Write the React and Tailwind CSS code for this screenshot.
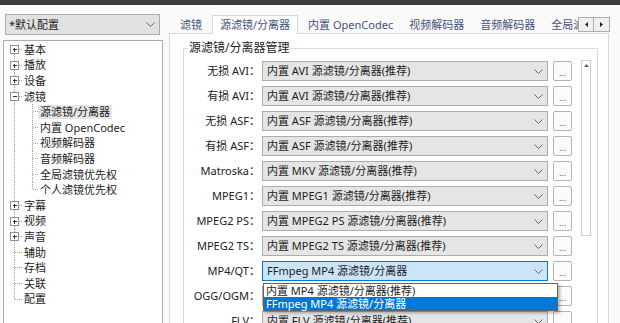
import React from 'react';

const tree = [
  { label: '基本', level: 0, icon: 'plus' },
  { label: '播放', level: 0, icon: 'plus' },
  { label: '设备', level: 0, icon: 'plus' },
  { label: '滤镜', level: 0, icon: 'minus' },
  { label: '源滤镜/分离器', level: 1, selected: true },
  { label: '内置 OpenCodec', level: 1 },
  { label: '视频解码器', level: 1 },
  { label: '音频解码器', level: 1 },
  { label: '全局滤镜优先权', level: 1 },
  { label: '个人滤镜优先权', level: 1, last: true },
  { label: '字幕', level: 0, icon: 'plus' },
  { label: '视频', level: 0, icon: 'plus' },
  { label: '声音', level: 0, icon: 'plus' },
  { label: '辅助', level: 0 },
  { label: '存档', level: 0 },
  { label: '关联', level: 0 },
  { label: '配置', level: 0, last: true },
];

const tabs = ['滤镜', '源滤镜/分离器', '内置 OpenCodec', '视频解码器', '音频解码器', '全局滤镜优先权', '个人滤镜优先权'];

const rows = [
  ['无损 AVI：', '内置 AVI 源滤镜/分离器(推荐)'],
  ['有损 AVI：', '内置 AVI 源滤镜/分离器(推荐)'],
  ['无损 ASF：', '内置 ASF 源滤镜/分离器(推荐)'],
  ['有损 ASF：', '内置 ASF 源滤镜/分离器(推荐)'],
  ['Matroska：', '内置 MKV 源滤镜/分离器(推荐)'],
  ['MPEG1：', '内置 MPEG1 源滤镜/分离器(推荐)'],
  ['MPEG2 PS：', '内置 MPEG2 PS 源滤镜/分离器(推荐)'],
  ['MPEG2 TS：', '内置 MPEG2 TS 源滤镜/分离器(推荐)'],
  ['MP4/QT：', 'FFmpeg MP4 源滤镜/分离器', true],
  ['OGG/OGM：', '内置 OGG 源滤镜/分离器(推荐)'],
  ['FLV：', '内置 FLV 源滤镜/分离器(推荐)'],
];

function Chevron() {
  return (
    <svg width="9" height="5" viewBox="0 0 9 5" className="shrink-0">
      <polyline points="0.5,0.5 4.5,4.5 8.5,0.5" fill="none" stroke="#666" strokeWidth="1" />
    </svg>
  );
}

// 트리 연결선 (점선) + 펼침 상자
function TreeRow({ item, first }) {
  const mid = 7.8;
  const dot = { stroke: '#a0a0a0', strokeWidth: 1, strokeDasharray: '1 1', shapeRendering: 'crispEdges' };
  return (
    <div className="relative h-[15.6px] flex items-center">
      <svg className="absolute left-0 top-0 overflow-visible" width="40" height="16">
        {/* 최상위 세로선 */}
        <line x1="10.5" x2="10.5" y1={first ? mid : 0} y2={item.level === 0 && item.last ? mid : 16} {...dot} />
        {item.level === 0 && <line x1="10.5" x2="19" y1={mid} y2={mid} {...dot} />}
        {item.level === 1 && (
          <>
            <line x1="28.5" x2="28.5" y1="0" y2={item.last ? mid : 16} {...dot} />
            <line x1="28.5" x2="34" y1={mid} y2={mid} {...dot} />
          </>
        )}
        {item.icon && (
          <g shapeRendering="crispEdges">
            <rect x="6.5" y="3.5" width="8" height="8" fill="#fff" stroke="#919191" />
            <line x1="8.5" x2="13" y1="7.5" y2="7.5" stroke="#333" />
            {item.icon === 'plus' && <line x1="10.5" x2="10.5" y1="5.5" y2="10" stroke="#333" />}
          </g>
        )}
      </svg>
      <span
        className={`${item.level ? 'ml-[34px]' : 'ml-[18px]'} px-[2px] leading-[14px] ${item.selected ? 'bg-[#e6e6e6]' : ''}`}
      >
        {item.label}
      </span>
    </div>
  );
}

function Combo({ value, active }) {
  return (
    <div
      className={`h-[20px] w-[286px] shrink-0 flex items-center justify-between pl-[4px] pr-[4px] border ${
        active ? 'bg-[#cce4f7] border-[#0078d7]' : 'bg-[#e5e5e5] border-[#adadad]'
      }`}
    >
      <span className="whitespace-nowrap leading-[18px]">{value}</span>
      <Chevron />
    </div>
  );
}

function DotsButton() {
  return (
    <div className="ml-[5px] h-[20px] w-[19px] shrink-0 border border-[#b4b4b4] rounded-[2px] bg-[#fbfbfb] flex items-end justify-center pb-[3px]">
      <span className="text-[9px] leading-[8px] text-[#555]">...</span>
    </div>
  );
}

export default function App() {
  return (
    <div className="w-[620px] h-[323px] overflow-hidden bg-[#fafafa] text-[11px] text-[#1e1e1e] font-['Noto_Sans','Noto_Sans_CJK_SC',sans-serif]">
      <div className="h-[5px] bg-[#3c3c3c]" />
      <div className="flex">
        {/* 왼쪽: 프로필 + 트리 */}
        <div className="w-[169px] shrink-0 pl-[5px] pt-[9px]">
          <div className="h-[21px] w-[155px] flex items-center justify-between pl-[3px] pr-[4px] bg-[#e1e1e1] border border-[#adadad]">
            <span className="leading-[18px]">*默认配置</span>
            <Chevron />
          </div>
          <div className="mt-[5px] ml-[-2px] w-[160px] h-[300px] bg-white border border-[#abadb3] pt-[1px]">
            {tree.map((it, i) => (
              <TreeRow key={i} item={it} first={i === 0} />
            ))}
          </div>
        </div>

        {/* 오른쪽: 탭 + 설정 */}
        <div className="w-[441px] shrink-0 pt-[9px]">
          <div className="relative z-10 mb-[-1px] flex h-[20px]">
            <div className="ml-[3px] w-[406px] overflow-hidden flex items-end">
              {tabs.map((t, i) =>
                i === 1 ? (
                  <div key={t} className="ml-[2px] mr-[2px] h-[19px] shrink-0 px-[7px] bg-white border border-b-0 border-[#d9d9d9] flex items-center text-[#44557a] whitespace-nowrap">
                    {t}
                  </div>
                ) : (
                  <div key={t} className="h-[18px] shrink-0 px-[8px] flex items-center text-[#44557a] whitespace-nowrap">
                    {t}
                  </div>
                )
              )}
            </div>
            <div className="mt-[3px] h-[15px] flex">
              <div className="w-[16px] h-[15px] border border-[#adadad] bg-[#f0f0f0] flex items-center justify-center">
                <svg width="3" height="5" viewBox="0 0 3 5"><polygon points="3,0 0,2.5 3,5" fill="#222" /></svg>
              </div>
              <div className="w-[16px] h-[15px] border border-l-0 border-[#adadad] bg-[#f0f0f0] flex items-center justify-center">
                <svg width="3" height="5" viewBox="0 0 3 5"><polygon points="0,0 3,2.5 0,5" fill="#222" /></svg>
              </div>
            </div>
          </div>

          <div className="w-[440px] h-[300px] bg-white border border-[#d9d9d9] pt-[14px]">
            <div className="relative ml-[13px] w-[415px] h-[300px] border border-[#dcdcdc] pt-[12px]">
              <span className="absolute left-[4px] top-[-9px] bg-white px-[1px] leading-[16px] text-[12px]">源滤镜/分离器管理</span>
              <div className="flex">
                <div className="flex flex-col gap-[5px]">
                  {rows.map(([label, value, active], i) => (
                    <div key={i} className="relative flex items-center">
                      <div className="w-[76px] shrink-0 text-right whitespace-nowrap text-[#222]">{label}</div>
                      <div className="ml-[2px]">
                        <Combo value={value} active={active} />
                      </div>
                      <DotsButton />
                      {active && (
                        <div className="absolute left-[79px] top-[22px] z-20 w-[295px] bg-white border border-[#646464] shadow-[2px_2px_3px_rgba(0,0,0,0.3)]">
                          <div className="h-[13px] leading-[13px] pl-[2px] whitespace-nowrap">内置 MP4 源滤镜/分离器(推荐)</div>
                          <div className="h-[13px] leading-[13px] pl-[2px] whitespace-nowrap bg-[#0078d7] text-white">FFmpeg MP4 源滤镜/分离器</div>
                        </div>
                      )}
                    </div>
                  ))}
                </div>
                <div className="ml-[9px] mt-[-1px] w-[10px] h-[176px] border border-[#cdcdcd] flex justify-center pt-[3px]">
                  <svg width="5" height="3" viewBox="0 0 5 3"><polygon points="0,3 2.5,0 5,3" fill="#606060" /></svg>
                </div>
              </div>
            </div>
          </div>
        </div>
      </div>
    </div>
  );
}
